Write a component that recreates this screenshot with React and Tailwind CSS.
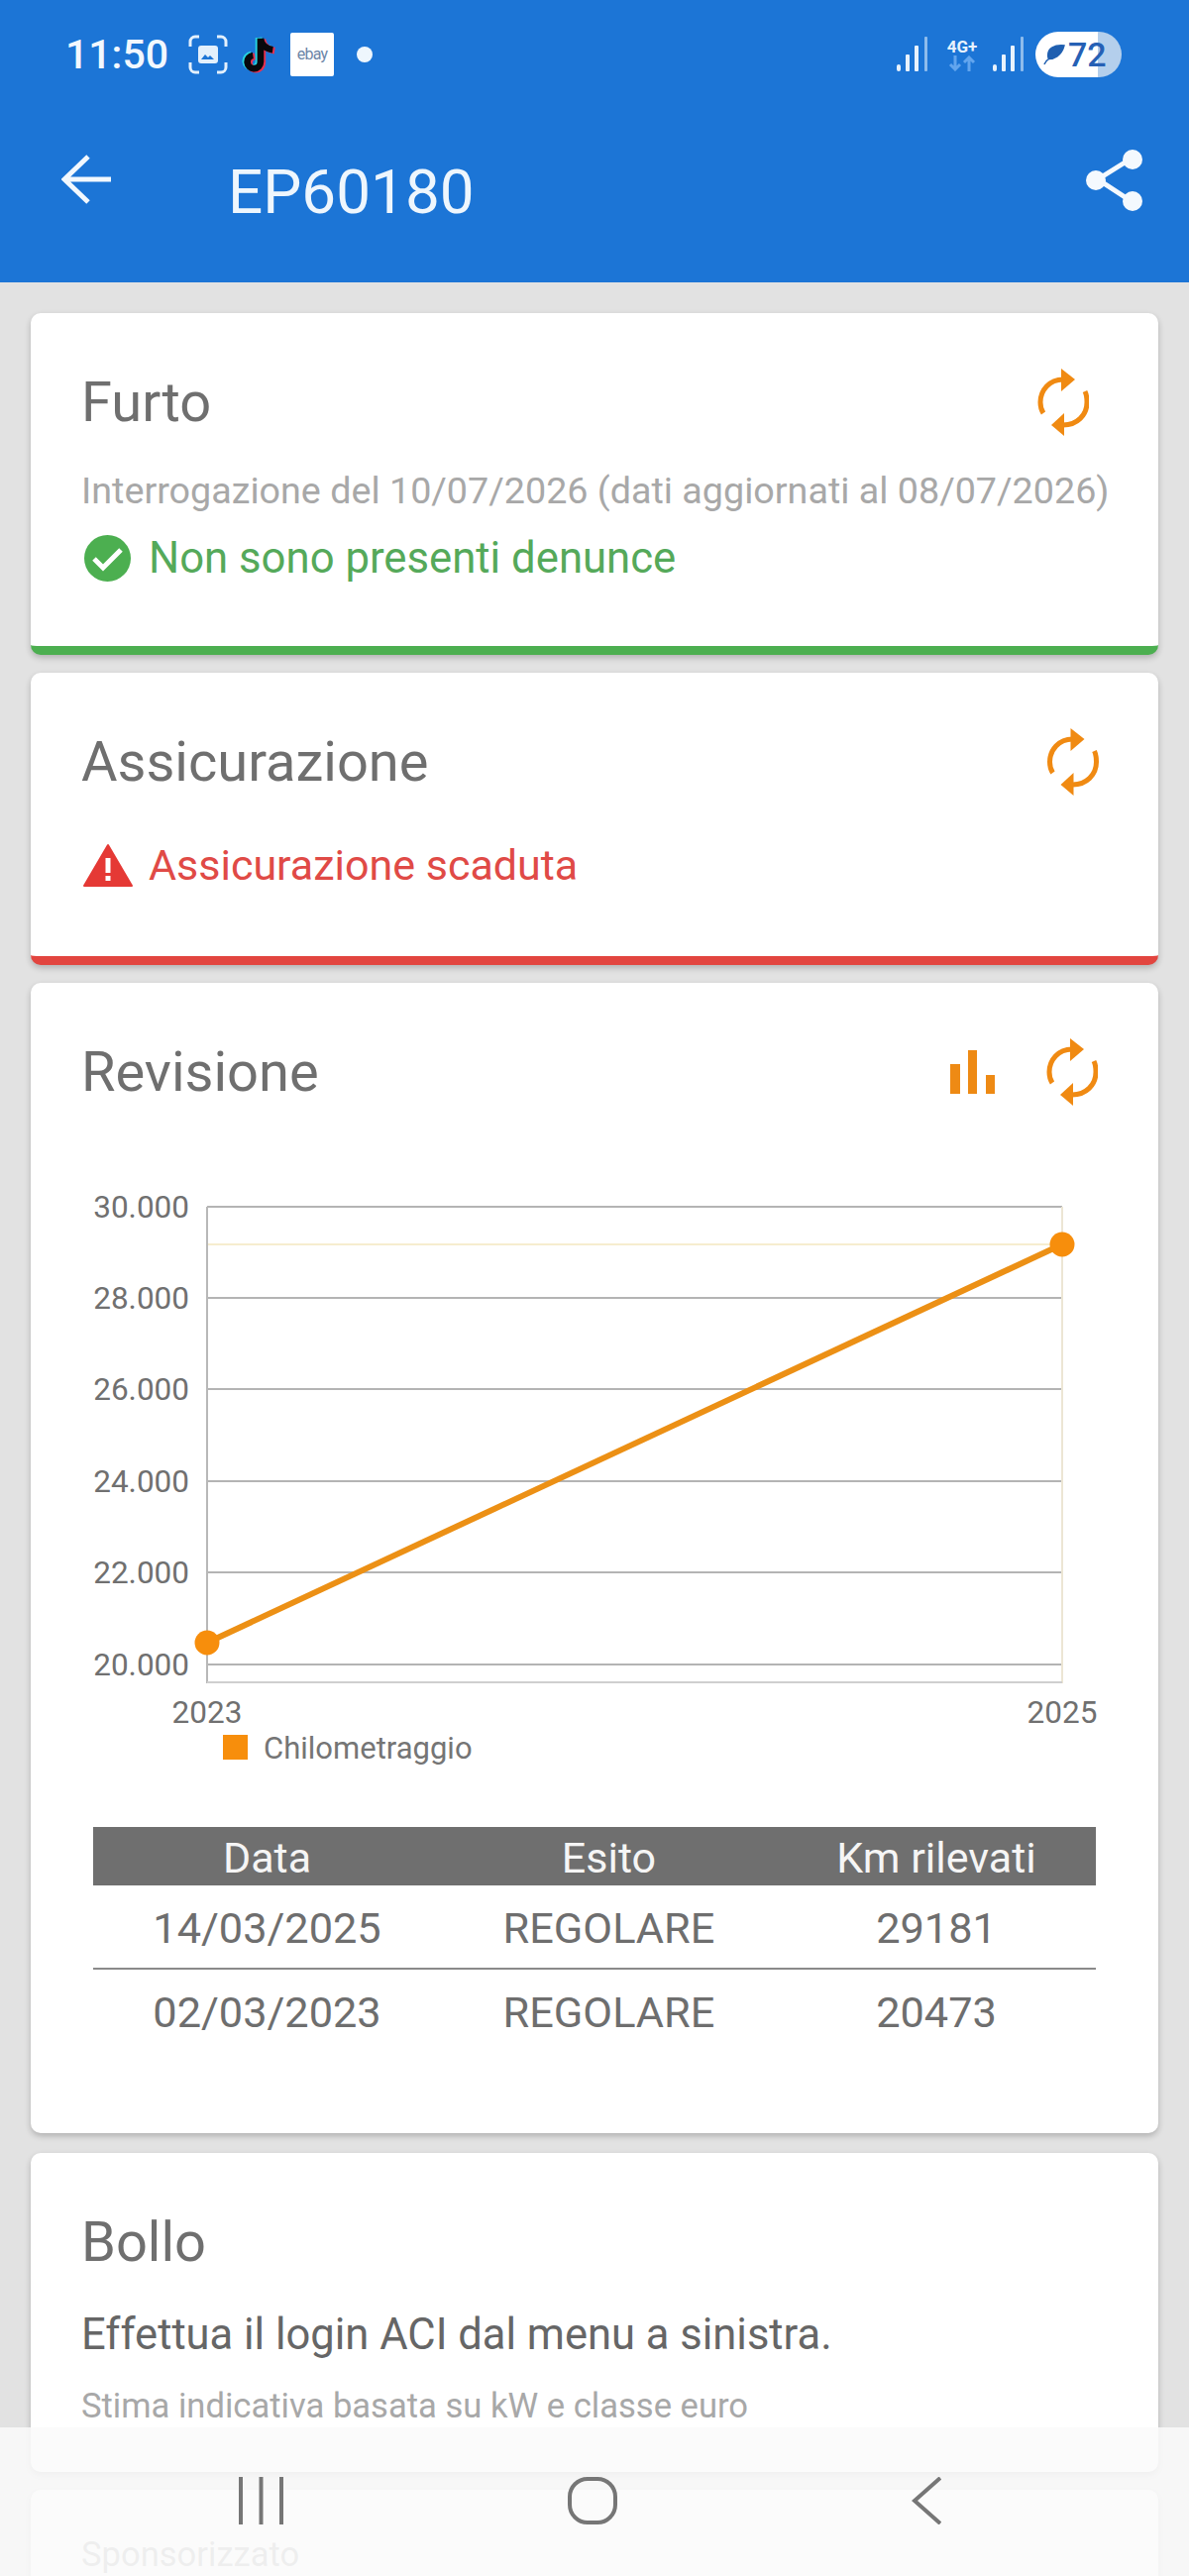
const ff = { fontFamily: 'Roboto, "Liberation Sans", sans-serif' };

function Sync({ className }) {
  return (
    <svg viewBox="0 0 52 68" className={className} fill="none">
      <path d="M26 11C12 11 3 22 3 34C3 38 4 42 6 45" stroke="#f08a12" strokeWidth="5" />
      <path d="M48 23C50 27 50 30 50 34C50 47 40 57 26 57" stroke="#f08a12" strokeWidth="5" />
      <polygon points="24,0 38,11 24,23" fill="#f08a12" />
      <polygon points="27,45 14,57 27,68" fill="#f08a12" />
    </svg>
  );
}

function Signal({ className }) {
  return (
    <svg viewBox="0 0 32 36" className={className}>
      <rect x="0" y="28" width="4" height="7" rx="2" fill="#e8f2fc" />
      <rect x="9" y="18" width="4" height="17" rx="1" fill="#e8f2fc" />
      <rect x="18" y="9" width="4" height="26" rx="1" fill="#e8f2fc" />
      <rect x="28" y="0" width="3" height="35" rx="1" fill="#8ebcec" />
    </svg>
  );
}

function Card({ children, className }) {
  return (
    <div className={`mx-[31px] rounded-[10px] bg-white shadow-[0_3px_6px_rgba(0,0,0,0.22)] ${className}`}>
      {children}
    </div>
  );
}

function Title({ children }) {
  return <div className="h-[60px] text-[56px] leading-[60px] text-[#6f6f6f]">{children}</div>;
}

function Chart() {
  const ys = [
    ['30.000', 18],
    ['28.000', 110],
    ['26.000', 202],
    ['24.000', 295],
    ['22.000', 387],
    ['20.000', 480],
  ];
  const x0 = 178;
  const x1 = 1041;
  return (
    <svg viewBox="0 0 1138 600" className="block h-[600px] w-[1138px]" style={ff}>
      {ys.map(([t, y]) => (
        <g key={t}>
          <line x1={x0} x2={x1} y1={y} y2={y} stroke="#b4b4b4" strokeWidth="2" />
          <text x="160" y={y + 11} textAnchor="end" fontSize="31.5" fill="#707070">{t}</text>
        </g>
      ))}
      <line x1={x0} x2={x1} y1="56" y2="56" stroke="#f6edcf" strokeWidth="2" />
      <line x1={x0} x2={x0} y1="18" y2="499" stroke="#b8b8b8" strokeWidth="2" />
      <line x1={x1} x2={x1} y1="18" y2="499" stroke="#ece6d4" strokeWidth="2" />
      <line x1={x0} x2={x1} y1="498" y2="498" stroke="#cfcfcf" strokeWidth="2" />
      <line x1={x0} x2={x1} y1="458" y2="56" stroke="#ec9015" strokeWidth="6" />
      <circle cx={x0} cy="458" r="12.5" fill="#f78e0c" />
      <circle cx={x1} cy="56" r="12.5" fill="#f78e0c" />
      <text x={x0} y="539" textAnchor="middle" fontSize="31.5" fill="#707070">2023</text>
      <text x={x1} y="539" textAnchor="middle" fontSize="31.5" fill="#707070">2025</text>
      <rect x="194" y="551" width="25" height="25" fill="#f78e0c" />
      <text x="235" y="575" fontSize="31" fill="#757575">Chilometraggio</text>
    </svg>
  );
}

export default function App() {
  const cols = 'grid grid-cols-[351px_339px_322px] text-center';
  return (
    <div className="relative flex h-[2600px] w-[1200px] flex-col overflow-hidden bg-[#e2e2e2]" style={ff}>
      <header className="h-[285px] shrink-0 bg-[#1c75d6]">
        <div className="flex h-[110px] items-center justify-between pl-[66px] pr-[68px]">
          <div className="flex items-center">
            <span className="w-[105px] text-[41px] font-medium leading-[48px] text-[#f2f8fe]">11:50</span>
            <svg viewBox="0 0 40 40" className="ml-[19px] h-[40px] w-[40px]" fill="none" stroke="#e3f0fc" strokeWidth="3">
              <path d="M2 12V7a5 5 0 0 1 5-5h4M29 2h4a5 5 0 0 1 5 5v5M38 28v5a5 5 0 0 1-5 5h-4M11 38H7a5 5 0 0 1-5-5v-5" />
              <rect x="10" y="11" width="20" height="18" rx="3" fill="#e3f0fc" stroke="none" />
              <path d="M13 25l4-5 3 3 2-2 4 4z" fill="#1c75d6" stroke="none" />
            </svg>
            <svg viewBox="0 0 40 44" className="ml-[13px] h-[44px] w-[38px]" fill="none">
              <path d="M21 5v25a7 7 0 1 1-8-7M21 5c1 7 6 11 13 12" stroke="#27d3e0" strokeWidth="7" transform="translate(-2 -1)" />
              <path d="M21 5v25a7 7 0 1 1-8-7M21 5c1 7 6 11 13 12" stroke="#e8304f" strokeWidth="7" transform="translate(2 1)" />
              <path d="M21 5v25a7 7 0 1 1-8-7M21 5c1 7 6 11 13 12" stroke="#07080c" strokeWidth="7" />
            </svg>
            <div className="ml-[12px] flex h-[44px] w-[44px] items-center justify-center rounded-[2px] bg-white text-[16px] tracking-[-0.8px] text-[#6d86a8]">
              ebay
            </div>
            <div className="ml-[23px] h-[16px] w-[16px] rounded-full bg-[#eef6fd]" />
          </div>
          <div className="flex items-center">
            <Signal className="h-[36px] w-[32px]" />
            <div className="ml-[14px] flex w-[40px] flex-col items-center">
              <span className="text-[17px] font-bold leading-[18px] text-[#e8f2fc]">4G+</span>
              <svg viewBox="0 0 30 16" className="h-[16px] w-[30px]" fill="none" stroke="#62a5ee" strokeWidth="3">
                <path d="M8 0v14M3 9l5 5 5-5M22 16V2M17 7l5-5 5 5" />
              </svg>
            </div>
            <Signal className="ml-[11px] h-[36px] w-[32px]" />
            <div className="ml-[11px] flex h-[46px] w-[87px] items-center rounded-full bg-[linear-gradient(90deg,#ffffff_72%,#b4cfec_72%)] pl-[8px]">
              <svg viewBox="0 0 24 24" className="h-[22px] w-[22px]">
                <path d="M23 2C12 1 5 5 5 13c0 2 .5 3 1 4 5 0 14-3 17-15zM6 17c-2 1-4 3-5 6" fill="#1f5fb0" stroke="#1f5fb0" strokeWidth="1.5" />
              </svg>
              <span className="ml-[3px] text-[34px] font-medium leading-[46px] text-[#2560b5]">72</span>
            </div>
          </div>
        </div>
        <div className="flex h-[168px] items-center justify-between pl-[62px] pr-[47px]">
          <div className="flex items-center">
            <svg viewBox="0 0 51 50" className="-mt-[26px] h-[50px] w-[51px]" fill="none" stroke="#f2f8fe" strokeWidth="5">
              <path d="M50 25H4M27 2L3 25l24 23" />
            </svg>
            <span className="ml-[117px] text-[62px] leading-[70px] text-[#eef6fd]">EP60180</span>
          </div>
          <svg viewBox="0 0 57 65" className="-mt-[26px] h-[65px] w-[57px]" fill="#f4f9fe" stroke="#f4f9fe">
            <path d="M44 12L12 32l32 21" fill="none" strokeWidth="5" />
            <circle cx="47" cy="12" r="10" stroke="none" />
            <circle cx="10" cy="33" r="10" stroke="none" />
            <circle cx="47" cy="54" r="10" stroke="none" />
          </svg>
        </div>
      </header>

      <main className="flex flex-col pt-[31px]">
        <Card className="h-[345px] border-b-[9px] border-[#4caf50] pl-[51px] pr-[54px] pt-[56px]">
          <div className="flex items-center justify-between">
            <Title>Furto</Title>
            <Sync className="mr-[16px] h-[68px] w-[52px]" />
          </div>
          <div className="mt-[30px] h-[50px] whitespace-nowrap text-[37.7px] leading-[50px] text-[#a8a8a8]">
            Interrogazione del 10/07/2026 (dati aggiornati al 08/07/2026)
          </div>
          <div className="mt-[18px] flex h-[50px] items-center">
            <svg viewBox="0 0 47 47" className="ml-[3px] h-[47px] w-[47px]">
              <circle cx="23.5" cy="23.5" r="23.5" fill="#4caf50" />
              <path d="M10 24l9 9 18-18" fill="none" stroke="#fff" strokeWidth="5" />
            </svg>
            <span className="ml-[18px] text-[43.7px] leading-[50px] text-[#55a95a]">Non sono presenti denunce</span>
          </div>
        </Card>

        <Card className="mt-[18px] h-[295px] border-b-[9px] border-[#e2453f] pl-[51px] pr-[54px] pt-[56px]">
          <div className="flex items-center justify-between">
            <Title>Assicurazione</Title>
            <Sync className="mr-[6px] h-[68px] w-[53px]" />
          </div>
          <div className="mt-[45px] flex h-[50px] items-center">
            <svg viewBox="0 0 50 45" className="ml-[2px] h-[45px] w-[50px]">
              <path d="M25 2L1 43h48z" fill="#e53935" stroke="#e53935" strokeWidth="2" strokeLinejoin="round" />
              <rect x="22.5" y="15" width="5" height="15" fill="#fff" />
              <rect x="22.5" y="33" width="5" height="5" fill="#fff" />
            </svg>
            <span className="ml-[16px] text-[43px] leading-[50px] text-[#e04a46]">Assicurazione scaduta</span>
          </div>
        </Card>

        <Card className="mt-[18px] h-[1161px] pt-[56px]">
          <div className="flex items-center justify-between pl-[51px] pr-[61px]">
            <Title>Revisione</Title>
            <div className="flex items-center">
              <svg viewBox="0 0 45 44" className="h-[44px] w-[45px]" fill="#ee8a14">
                <rect x="0" y="14" width="10" height="30" />
                <rect x="18" y="0" width="9" height="44" />
                <rect x="36" y="25" width="9" height="19" />
              </svg>
              <Sync className="ml-[52px] h-[68px] w-[52px]" />
            </div>
          </div>
          <div className="mt-[84px]">
            <Chart />
          </div>
          <div className="ml-[63px] mt-[44px] w-[1012px]">
            <div className={`${cols} h-[59px] bg-[#6f6f6f] text-[43px] leading-[63px] text-[#f5f5f5]`}>
              <span>Data</span>
              <span>Esito</span>
              <span>Km rilevati</span>
            </div>
            <div className={`${cols} h-[85px] border-b-2 border-[#8a8a8a] text-[43.3px] leading-[87px] text-[#6e6e6e]`}>
              <span>14/03/2025</span>
              <span>REGOLARE</span>
              <span>29181</span>
            </div>
            <div className={`${cols} h-[88px] text-[43.3px] leading-[88px] text-[#6e6e6e]`}>
              <span>02/03/2023</span>
              <span>REGOLARE</span>
              <span>20473</span>
            </div>
          </div>
        </Card>

        <Card className="mt-[20px] h-[322px] pl-[51px] pt-[60px]">
          <Title>Bollo</Title>
          <div className="mt-[39px] h-[50px] text-[43.5px] leading-[50px] text-[#666666]">
            Effettua il login ACI dal menu a sinistra.
          </div>
          <div className="mt-[24px] h-[44px] text-[34.6px] leading-[44px] text-[#a8a8a8]">
            Stima indicativa basata su kW e classe euro
          </div>
        </Card>

        <Card className="mt-[18px] h-[200px] pl-[51px] pt-[45px]">
          <div className="h-[40px] text-[34.6px] leading-[40px] text-[#a8a8a8]">Sponsorizzato</div>
        </Card>
      </main>

      <nav className="absolute bottom-0 left-0 flex h-[150px] w-[1200px] items-start bg-[#fafafa]/85 pt-[50px]">
        <svg viewBox="0 0 45 48" className="ml-[241px] h-[48px] w-[45px]" fill="none" stroke="#767676" strokeWidth="4">
          <path d="M2 0v48M22.5 0v48M43 0v48" />
        </svg>
        <svg viewBox="0 0 50 48" className="ml-[287px] h-[48px] w-[50px]" fill="none" stroke="#767676" strokeWidth="4">
          <rect x="2" y="2" width="46" height="44" rx="18" />
        </svg>
        <svg viewBox="0 0 30 48" className="ml-[297px] h-[48px] w-[30px]" fill="none" stroke="#767676" strokeWidth="4">
          <path d="M29 1L3 24l26 23" />
        </svg>
      </nav>
    </div>
  );
}
